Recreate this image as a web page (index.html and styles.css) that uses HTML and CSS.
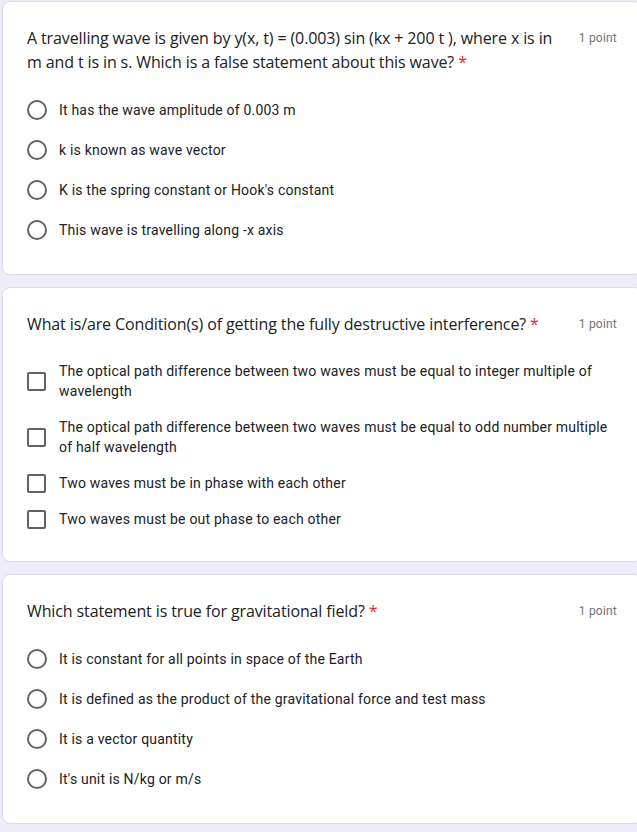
FILE: index.html
```html
<!DOCTYPE html>
<html lang="en">
<head>
<meta charset="utf-8">
<title>Quiz</title>
<link rel="stylesheet" href="styles.css">
</head>
<body>
<main class="form">
  <section class="card">
    <div class="q-head">
      <div class="q-title">A travelling wave is given by y(x, t) = (0.003) sin (kx + 200 t ), where x is in m and t is in s. Which is a false statement about this wave?<span class="req">*</span></div>
      <div class="q-points">1 point</div>
    </div>
    <ul class="options">
      <li class="opt radio-opt"><span class="radio"></span><span class="opt-text">It has the wave amplitude of 0.003 m</span></li>
      <li class="opt radio-opt"><span class="radio"></span><span class="opt-text">k is known as wave vector</span></li>
      <li class="opt radio-opt"><span class="radio"></span><span class="opt-text">K is the spring constant or Hook's constant</span></li>
      <li class="opt radio-opt"><span class="radio"></span><span class="opt-text">This wave is travelling along -x axis</span></li>
    </ul>
  </section>

  <section class="card">
    <div class="q-head">
      <div class="q-title">What is/are Condition(s) of getting the fully destructive interference?<span class="req">*</span></div>
      <div class="q-points">1 point</div>
    </div>
    <ul class="options options-check">
      <li class="opt check-opt"><span class="checkbox"></span><span class="opt-text">The optical path difference between two waves must be equal to integer multiple of wavelength</span></li>
      <li class="opt check-opt"><span class="checkbox"></span><span class="opt-text">The optical path difference between two waves must be equal to odd number multiple of half wavelength</span></li>
      <li class="opt check-opt"><span class="checkbox"></span><span class="opt-text">Two waves must be in phase with each other</span></li>
      <li class="opt check-opt"><span class="checkbox"></span><span class="opt-text">Two waves must be out phase to each other</span></li>
    </ul>
  </section>

  <section class="card">
    <div class="q-head">
      <div class="q-title">Which statement is true for gravitational field?<span class="req">*</span></div>
      <div class="q-points">1 point</div>
    </div>
    <ul class="options">
      <li class="opt radio-opt"><span class="radio"></span><span class="opt-text">It is constant for all points in space of the Earth</span></li>
      <li class="opt radio-opt"><span class="radio"></span><span class="opt-text">It is defined as the product of the gravitational force and test mass</span></li>
      <li class="opt radio-opt"><span class="radio"></span><span class="opt-text">It is a vector quantity</span></li>
      <li class="opt radio-opt"><span class="radio"></span><span class="opt-text">It's unit is N/kg or m/s</span></li>
    </ul>
  </section>
</main>
</body>
</html>
```

FILE: styles.css
```css
html, body {
  margin: 0;
  padding: 0;
  overflow: hidden;
  background: #f0ebf8;
}

.form {
  display: flex;
  flex-direction: column;
  gap: 12px;
  padding: 1px 0 12px 2px;
  width: 640px;
}

.card {
  box-sizing: border-box;
  width: 640px;
  background: #ffffff;
  border: 1px solid #dadce0;
  border-radius: 8px;
  padding: 24px;
}

.q-head {
  display: flex;
  align-items: flex-start;
}

.q-title {
  flex: 1;
  font-family: "Open Sans", Roboto, sans-serif;
  font-size: 16px;
  line-height: 24px;
  color: #202124;
  letter-spacing: -0.12px;
}

.req {
  color: #d93025;
  margin-left: 4px;
}

.q-points {
  margin-left: 20px;
  font-family: Roboto, "Liberation Sans", sans-serif;
  font-size: 12px;
  line-height: 24px;
  color: #70757a;
  letter-spacing: 0.2px;
  white-space: nowrap;
}

.options {
  list-style: none;
  margin: 16px 0 0;
  padding: 0;
}

.options-check {
  margin-top: 17px;
}

.opt {
  display: flex;
  align-items: center;
  gap: 12px;
  font-family: Roboto, "Liberation Sans", sans-serif;
  font-size: 14px;
  line-height: 20px;
  letter-spacing: 0.2px;
  color: #202124;
}

.radio-opt {
  min-height: 40px;
}

.check-opt {
  padding: 8px 0;
}

.radio {
  flex: none;
  box-sizing: border-box;
  width: 20px;
  height: 20px;
  border: 2px solid #5f6368;
  border-radius: 50%;
}

.checkbox {
  flex: none;
  box-sizing: border-box;
  width: 19px;
  height: 19px;
  margin: 0 1px 0 0;
  border: 2px solid #5f6368;
  border-radius: 2px;
}
```
